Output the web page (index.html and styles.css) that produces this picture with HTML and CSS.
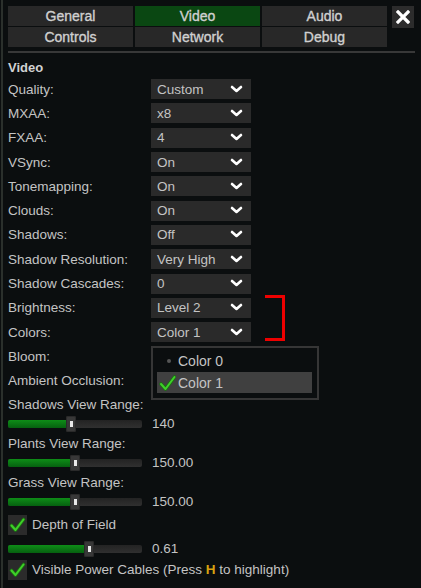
FILE: index.html
```html
<!DOCTYPE html>
<html>
<head>
<meta charset="utf-8">
<link rel="stylesheet" href="styles.css">
</head>
<body>
<div class="frame">
  <div class="tabs-bar">
    <div class="tabs">
      <div class="tab">General</div>
      <div class="tab active">Video</div>
      <div class="tab">Audio</div>
      <div class="tab">Controls</div>
      <div class="tab">Network</div>
      <div class="tab">Debug</div>
    </div>
    <div class="close"><svg width="14" height="14" viewBox="0 0 14 14"><path d="M2 2 L12 12 M12 2 L2 12" stroke="#fff" stroke-width="3.2" stroke-linecap="square"/></svg></div>
  </div>
  <div class="sep"></div>
  <div class="heading">Video</div>

  <div class="form">
    <div class="row"><span class="label">Quality:</span><div class="select"><span>Custom</span><svg class="chev" width="13" height="8" viewBox="0 0 13 8"><polyline points="2,2 6.5,6 11,2" fill="none" stroke="#fff" stroke-width="2.6" stroke-linecap="round" stroke-linejoin="round"/></svg></div></div>
    <div class="row"><span class="label">MXAA:</span><div class="select"><span>x8</span><svg class="chev" width="13" height="8" viewBox="0 0 13 8"><polyline points="2,2 6.5,6 11,2" fill="none" stroke="#fff" stroke-width="2.6" stroke-linecap="round" stroke-linejoin="round"/></svg></div></div>
    <div class="row"><span class="label">FXAA:</span><div class="select"><span>4</span><svg class="chev" width="13" height="8" viewBox="0 0 13 8"><polyline points="2,2 6.5,6 11,2" fill="none" stroke="#fff" stroke-width="2.6" stroke-linecap="round" stroke-linejoin="round"/></svg></div></div>
    <div class="row"><span class="label">VSync:</span><div class="select"><span>On</span><svg class="chev" width="13" height="8" viewBox="0 0 13 8"><polyline points="2,2 6.5,6 11,2" fill="none" stroke="#fff" stroke-width="2.6" stroke-linecap="round" stroke-linejoin="round"/></svg></div></div>
    <div class="row"><span class="label">Tonemapping:</span><div class="select"><span>On</span><svg class="chev" width="13" height="8" viewBox="0 0 13 8"><polyline points="2,2 6.5,6 11,2" fill="none" stroke="#fff" stroke-width="2.6" stroke-linecap="round" stroke-linejoin="round"/></svg></div></div>
    <div class="row"><span class="label">Clouds:</span><div class="select"><span>On</span><svg class="chev" width="13" height="8" viewBox="0 0 13 8"><polyline points="2,2 6.5,6 11,2" fill="none" stroke="#fff" stroke-width="2.6" stroke-linecap="round" stroke-linejoin="round"/></svg></div></div>
    <div class="row"><span class="label">Shadows:</span><div class="select"><span>Off</span><svg class="chev" width="13" height="8" viewBox="0 0 13 8"><polyline points="2,2 6.5,6 11,2" fill="none" stroke="#fff" stroke-width="2.6" stroke-linecap="round" stroke-linejoin="round"/></svg></div></div>
    <div class="row"><span class="label">Shadow Resolution:</span><div class="select"><span>Very High</span><svg class="chev" width="13" height="8" viewBox="0 0 13 8"><polyline points="2,2 6.5,6 11,2" fill="none" stroke="#fff" stroke-width="2.6" stroke-linecap="round" stroke-linejoin="round"/></svg></div></div>
    <div class="row"><span class="label">Shadow Cascades:</span><div class="select"><span>0</span><svg class="chev" width="13" height="8" viewBox="0 0 13 8"><polyline points="2,2 6.5,6 11,2" fill="none" stroke="#fff" stroke-width="2.6" stroke-linecap="round" stroke-linejoin="round"/></svg></div></div>
    <div class="row"><span class="label">Brightness:</span><div class="select"><span>Level 2</span><svg class="chev" width="13" height="8" viewBox="0 0 13 8"><polyline points="2,2 6.5,6 11,2" fill="none" stroke="#fff" stroke-width="2.6" stroke-linecap="round" stroke-linejoin="round"/></svg></div></div>
    <div class="row"><span class="label">Colors:</span><div class="select"><span>Color 1</span><svg class="chev" width="13" height="8" viewBox="0 0 13 8"><polyline points="2,2 6.5,6 11,2" fill="none" stroke="#fff" stroke-width="2.6" stroke-linecap="round" stroke-linejoin="round"/></svg></div></div>
    <div class="row"><span class="label">Bloom:</span></div>
    <div class="row"><span class="label">Ambient Occlusion:</span></div>

    <div class="bracket"></div>
    <div class="popup">
      <div class="item"><span class="mark"><span class="dot"></span></span><span>Color 0</span></div>
      <div class="item selected"><span class="mark"><svg width="17" height="16" viewBox="0 0 17 16"><path d="M2 9 L6.5 14 L15.5 2" fill="none" stroke="#1c6e12" stroke-width="3.6" stroke-linecap="round" stroke-linejoin="round"/><path d="M2 9 L6.5 14 L15.5 2" fill="none" stroke="#3fcf2a" stroke-width="2" stroke-linecap="round" stroke-linejoin="round"/></svg></span><span>Color 1</span></div>
    </div>
  </div>

  <div class="slabel">Shadows View Range:</div>
  <div class="slider-row">
    <div class="track"><div class="fill" style="width:63px"></div><div class="thumb" style="left:58px"></div></div>
    <span class="value">140</span>
  </div>
  <div class="slabel">Plants View Range:</div>
  <div class="slider-row">
    <div class="track"><div class="fill" style="width:67px"></div><div class="thumb" style="left:62px"></div></div>
    <span class="value">150.00</span>
  </div>
  <div class="slabel">Grass View Range:</div>
  <div class="slider-row">
    <div class="track"><div class="fill" style="width:67px"></div><div class="thumb" style="left:62px"></div></div>
    <span class="value">150.00</span>
  </div>
  <div class="check-row">
    <div class="box"><svg width="17" height="16" viewBox="0 0 17 16"><path d="M2.5 8.5 L6.5 13 L14.5 2.5" fill="none" stroke="#1c6e12" stroke-width="3.6" stroke-linecap="round" stroke-linejoin="round"/><path d="M2.5 8.5 L6.5 13 L14.5 2.5" fill="none" stroke="#3fcf2a" stroke-width="2" stroke-linecap="round" stroke-linejoin="round"/></svg></div>
    <span>Depth of Field</span>
  </div>
  <div class="slider-row after-check">
    <div class="track"><div class="fill" style="width:81px"></div><div class="thumb" style="left:76px"></div></div>
    <span class="value">0.61</span>
  </div>
  <div class="check-row tight">
    <div class="box"><svg width="17" height="16" viewBox="0 0 17 16"><path d="M2.5 8.5 L6.5 13 L14.5 2.5" fill="none" stroke="#1c6e12" stroke-width="3.6" stroke-linecap="round" stroke-linejoin="round"/><path d="M2.5 8.5 L6.5 13 L14.5 2.5" fill="none" stroke="#3fcf2a" stroke-width="2" stroke-linecap="round" stroke-linejoin="round"/></svg></div>
    <span>Visible Power Cables (Press <b class="key">H</b> to highlight)</span>
  </div>
</div>
</body>
</html>
```

FILE: styles.css
```css
html, body {
  margin: 0;
  padding: 0;
  background: #0b0e0f;
  height: 100%;
}
body {
  font-family: "Liberation Sans", Arial, sans-serif;
  font-size: 13.5px;
  color: #c4c4c4;
  overflow: hidden;
}
.frame {
  margin-left: 1px;
  border-left: 2px solid #2b302c;
  padding: 6px 0 0 5px;
  height: 100%;
  box-sizing: border-box;
}
.tabs-bar {
  display: flex;
  align-items: flex-start;
}
.tabs {
  display: grid;
  grid-template-columns: 125px 125px 125px;
  grid-auto-rows: 20px;
  column-gap: 2px;
  row-gap: 1px;
}
.tab {
  background: #282828;
  color: #d0d0d0;
  font-size: 14px;
  -webkit-text-stroke: 0.35px #d0d0d0;
  display: flex;
  align-items: center;
  justify-content: center;
  line-height: 20px;
}
.tab.active {
  background: #0a4712;
}
.close {
  margin-left: 5px;
  width: 22px;
  height: 22px;
  background: #2c2c2c;
  display: flex;
  align-items: center;
  justify-content: center;
}
.sep {
  margin-top: 4px;
  width: 407px;
  height: 2px;
  background: #383838;
}
.heading {
  margin-top: 7px;
  height: 16px;
  line-height: 16px;
  font-size: 13px;
  font-weight: bold;
  color: #d2d2d2;
}
.form {
  position: relative;
  margin-top: 1px;
  display: grid;
  grid-auto-rows: 24.3px;
}
.row {
  display: flex;
  align-items: center;
}
.label {
  width: 143px;
}
.select {
  width: 100px;
  height: 20px;
  background: #2a2a2a;
  display: flex;
  align-items: center;
  justify-content: space-between;
  padding: 0 8px 0 6px;
  box-sizing: border-box;
  color: #c4c4c4;
}
.chev {
  display: block;
  margin-top: -1px;
}
.bracket {
  position: absolute;
  left: 257px;
  top: 218px;
  width: 17px;
  height: 40px;
  border: 3px solid #ee0000;
  border-left: none;
}
.popup {
  position: absolute;
  left: 143px;
  top: 269px;
  width: 168px;
  box-sizing: border-box;
  border: 2px solid #363636;
  background: #0b0e0f;
  padding: 3px 5px 5px 4px;
  font-size: 14px;
  display: flex;
  flex-direction: column;
  gap: 1px;
}
.item {
  height: 20px;
  display: flex;
  align-items: center;
}
.item.selected {
  background: #404040;
  height: 21px;
}
.mark {
  width: 21px;
  display: flex;
  align-items: center;
  justify-content: center;
}
.dot {
  width: 4px;
  height: 4px;
  border-radius: 50%;
  background: #555;
  margin-left: 3px;
}
.slabel {
  margin-top: 4px;
  height: 16px;
  line-height: 16px;
}
.slider-row {
  margin-top: 3px;
  height: 16px;
  display: flex;
  align-items: center;
}
.slider-row.after-check {
  margin-top: 6px;
}
.track {
  position: relative;
  width: 134px;
  height: 8px;
  border-radius: 2px;
  background: linear-gradient(#232323, #303030);
}
.fill {
  height: 8px;
  border-radius: 2px 0 0 2px;
  background: linear-gradient(#0e8d17, #066010);
}
.thumb {
  position: absolute;
  top: -4px;
  width: 10px;
  height: 16px;
  border-radius: 2px;
  background: #383838;
  box-shadow: inset 0 0 0 1px #2a2a2a;
}
.thumb::after {
  content: "";
  position: absolute;
  left: 3.5px;
  top: 5px;
  width: 3px;
  height: 6px;
  background: #e8e8e8;
}
.value {
  margin-left: 10px;
  line-height: 16px;
}
.check-row {
  margin-top: 5px;
  height: 20px;
  display: flex;
  align-items: center;
}
.check-row.tight {
  margin-top: 3px;
}
.box {
  width: 19px;
  height: 20px;
  background: #2b2b2b;
  display: flex;
  align-items: center;
  justify-content: center;
  margin-right: 5px;
}
.key {
  color: #d9a30f;
}
```
